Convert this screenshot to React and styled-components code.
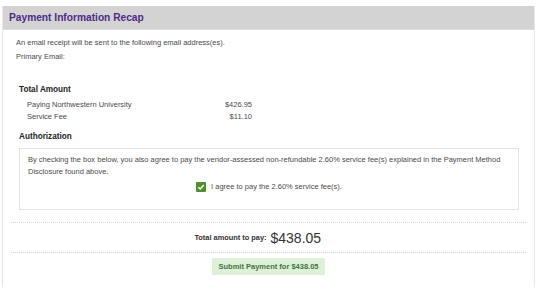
import React from 'react';
import styled, { createGlobalStyle } from 'styled-components';

const GlobalStyle = createGlobalStyle`
  body {
    margin: 0;
    background: #fff;
    font-family: "Liberation Sans", Arial, sans-serif;
    color: #4a4a4a;
  }
`

const Panel = styled.section`
  width: 531px;
  margin: 6px 0 0 2px;
  border-left: 1px solid #e8e8e8;
  border-right: 1px solid #e8e8e8;
  padding-bottom: 12px;
`

const PanelHeader = styled.h2`
  margin: 0;
  height: 23px;
  display: flex;
  align-items: center;
  padding-left: 6px;
  background: #d3d3d3;
  border-bottom: 1px solid #dcdcdc;
  color: #4e2a84;
  font-size: 10.2px;
  font-weight: bold;
`

const PanelBody = styled.div`
  padding: 7px 8px 0 8px;
  font-size: 7.5px;
  line-height: 12px;
`

const Note = styled.p`
  margin: 0 0 2px 5px;
`

const Section = styled.div`
  padding: 0 7px 0 8px;
  margin-top: ${({top}) => top}px;
`

const Heading = styled.h3`
  margin: 0;
  font-size: 8.2px;
  line-height: 12px;
  font-weight: bold;
  color: #222;
`

const FeeTable = styled.div`
  width: 225px;
  margin: 3px 0 0 8px;
`

const FeeRow = styled.div`
  display: flex;
  justify-content: space-between;
`

const AuthBox = styled.div`
  margin-top: 5px;
  border: 1px solid #e2e2e2;
  padding: 5px 8px 16px 8px;
`

const AuthText = styled.p`
  margin: 0;
`

const AgreeRow = styled.label`
  display: flex;
  align-items: center;
  justify-content: center;
  gap: 5px;
  margin-top: 3px;
`

const CheckBox = styled.span`
  width: 10px;
  height: 10px;
  border-radius: 1px;
  background: #4f8f2f;
  display: inline-flex;
  align-items: center;
  justify-content: center;
`

const Divider = styled.hr`
  margin: ${({top}) => top || 0}px 0 0 0;
  border: none;
  border-top: 1px dotted #d6d6d6;
`

const TotalRow = styled.div`
  display: grid;
  grid-template-columns: 1fr 1fr;
  align-items: center;
  column-gap: 4px;
  padding: 6px 0 5px 0;
`

const TotalLabel = styled.span`
  text-align: right;
  font-weight: bold;
  color: #333;
  font-size: 7.4px;
`

const TotalValue = styled.span`
  font-size: 14px;
  line-height: 18px;
  color: #333;
`

const ButtonRow = styled.div`
  display: flex;
  justify-content: center;
  margin-top: 5px;
`

const SubmitButton = styled.button`
  height: 17px;
  padding: 0 6px;
  border: none;
  border-radius: 1px;
  background: #dff0d8;
  color: #3c763d;
  font-family: inherit;
  font-size: 7.5px;
  font-weight: bold;
`

function App() {
    return (
        <>
            <GlobalStyle/>
            <Panel>
                <PanelHeader>Payment Information Recap</PanelHeader>
                <PanelBody>
                    <Note>An email receipt will be sent to the following email address(es).</Note>
                    <Note>Primary Email:</Note>
                    <Section top={21}>
                        <Heading>Total Amount</Heading>
                        <FeeTable>
                            <FeeRow><span>Paying Northwestern University</span><span>$426.95</span></FeeRow>
                            <FeeRow><span>Service Fee</span><span>$11.10</span></FeeRow>
                        </FeeTable>
                    </Section>
                    <Section top={8}>
                        <Heading>Authorization</Heading>
                        <AuthBox>
                            <AuthText>
                                By checking the box below, you also agree to pay the vendor-assessed non-refundable 2.60% service fee(s) explained in the Payment Method Disclosure found above.
                            </AuthText>
                            <AgreeRow>
                                <CheckBox>
                                    <svg width="8" height="8" viewBox="0 0 8 8">
                                        <path d="M1.3 4.2 L3.2 6 L6.8 2" fill="none" stroke="#fff" strokeWidth="1.4"/>
                                    </svg>
                                </CheckBox>
                                <span>I agree to pay the 2.60% service fee(s).</span>
                            </AgreeRow>
                        </AuthBox>
                    </Section>
                    <Divider top={12}/>
                    <TotalRow>
                        <TotalLabel>Total amount to pay:</TotalLabel>
                        <TotalValue>$438.05</TotalValue>
                    </TotalRow>
                    <Divider/>
                    <ButtonRow>
                        <SubmitButton>Submit Payment for $438.05</SubmitButton>
                    </ButtonRow>
                </PanelBody>
            </Panel>
        </>
    );
}

export default App;
